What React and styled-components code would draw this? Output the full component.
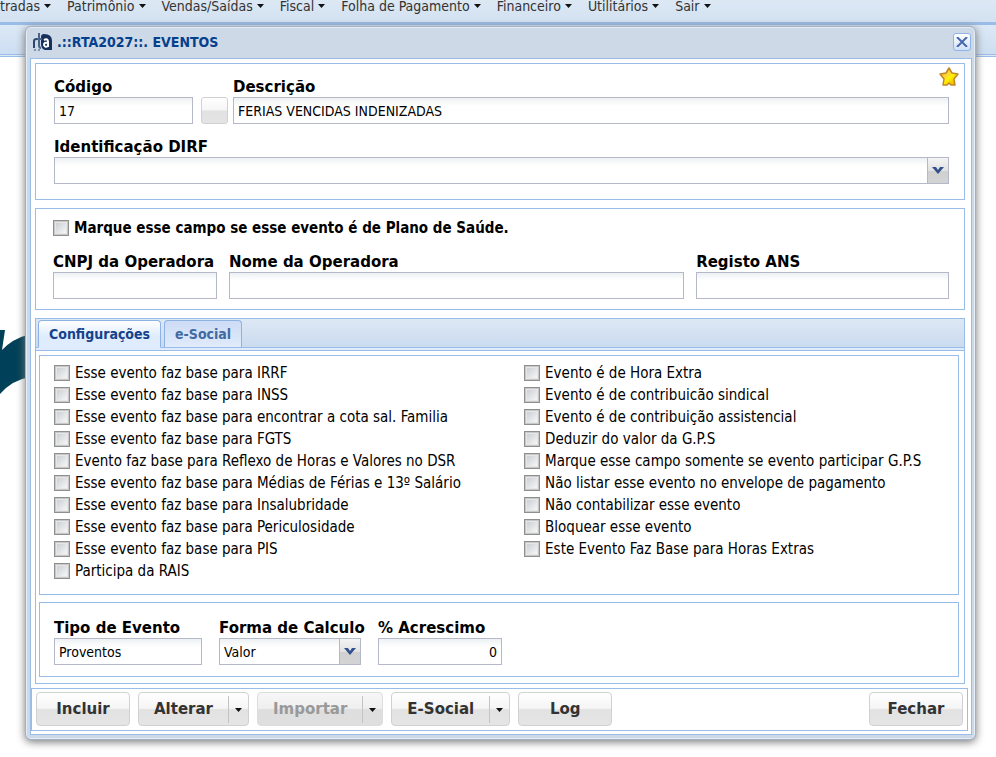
import { useState } from "react"
import styled, { createGlobalStyle } from "styled-components"

const menus = ["Entradas", "Patrimônio", "Vendas/Saídas", "Fiscal", "Folha de Pagamento", "Financeiro", "Utilitários", "Sair"];

const flags = [
    "Esse evento faz base para IRRF",
    "Esse evento faz base para INSS",
    "Esse evento faz base para encontrar a cota sal. Familia",
    "Esse evento faz base para FGTS",
    "Evento faz base para Reflexo de Horas e Valores no DSR",
    "Esse evento faz base para Médias de Férias e 13º Salário",
    "Esse evento faz base para Insalubridade",
    "Esse evento faz base para Periculosidade",
    "Esse evento faz base para PIS",
    "Participa da RAIS",
    "Evento é de Hora Extra",
    "Evento é de contribuicão sindical",
    "Evento é de contribuição assistencial",
    "Deduzir do valor da G.P.S",
    "Marque esse campo somente se evento participar G.P.S",
    "Não listar esse evento no envelope de pagamento",
    "Não contabilizar esse evento",
    "Bloquear esse evento",
    "Este Evento Faz Base para Horas Extras",
];

const Arrow = () => (
    <svg width="7" height="4" viewBox="0 0 7 4" aria-hidden="true">
        <path d="M0 0H7L3.5 4Z" fill="currentColor" />
    </svg>
)

const Logo = () => (
    <svg width="21" height="20" viewBox="0 0 21 20" aria-hidden="true">
        <path d="M12 2Q20 2 20 9V18H13Q9 17 9 12V5Q9 2 12 2Z" fill="#17305c" />
        <path d="M2 16V9Q2 7 5 7" fill="none" stroke="#2c466f" strokeWidth="2" />
        <path d="M7 1V13Q7 16 9 16M5 7H10" fill="none" stroke="#4a6488" strokeWidth="2" />
        <path d="M12 8Q16 6 16 10V15M16 11Q12 10 12 13Q13 16 16 14" fill="none" stroke="#fff" strokeWidth="2" />
        <path d="M2 18H4M6 18H8" stroke="#7f93b0" strokeWidth="2" />
    </svg>
)

const Star = () => (
    <svg width="20" height="20" viewBox="0 0 20 20" aria-hidden="true">
        <defs>
            <linearGradient id="gold" x1="0" y1="0" x2="1" y2="1">
                <stop offset="0" stopColor="#f0a800" />
                <stop offset="0.4" stopColor="#ffd83a" />
                <stop offset="0.55" stopColor="#fff200" />
                <stop offset="1" stopColor="#e89a00" />
            </linearGradient>
        </defs>
        <path d="M10 1L13 6L19 7L15 12L16 18L12 18L10 16L8 18L4 18L5 12L1 7L7 6Z" fill="url(#gold)" stroke="#c0862a" strokeWidth="1.5" strokeLinejoin="round" />
    </svg>
)

const Field = ({ id, label, ...rest }) => (
    <StyledField>
        <label htmlFor={id}>{label}</label>
        <TextBox id={id} {...rest} />
    </StyledField>
)

const Combo = ({ id, label, value }) => (
    <StyledField>
        <label htmlFor={id}>{label}</label>
        <StyledCombo>
            <select id={id} defaultValue={value}>
                <option>{value}</option>
            </select>
            <span>
                <svg width="12" height="8" viewBox="0 0 12 8" aria-hidden="true">
                    <path d="M0 0H4L6 3L8 0H12L6 7Z" fill="#32518d" />
                </svg>
            </span>
        </StyledCombo>
    </StyledField>
)

const Split = ({ label, disabled }) => (
    <StyledSplit $off={disabled}>
        <button type="button" disabled={disabled}>{label}</button>
        <button type="button" disabled={disabled} className="more" aria-label={"Mais opções de " + label}><Arrow /></button>
    </StyledSplit>
)

const App = () => {
    const [tab, setTab] = useState("Configurações");
    return (
        <Desktop>
            <GlobalStyle />
            <MenuBar>
                {menus.map((m) => <button type="button" key={m}>{m}<Arrow /></button>)}
            </MenuBar>
            <ShortcutBar />
            <Brand width="30" height="80" viewBox="0 0 30 80" aria-hidden="true">
                <path d="M0 10H5L2 30Q12 19 30 14V57Q12 60 0 74Z" fill="#004058" />
            </Brand>
            <Window>
                <TitleBar>
                    <Logo />
                    <h1>.::RTA2027::. EVENTOS</h1>
                    <button type="button" aria-label="Fechar janela">
                        <svg width="12" height="10" viewBox="0 0 12 10" aria-hidden="true">
                            <path d="M1 0L11 10M11 0L1 10" stroke="#4767b0" strokeWidth="2" />
                        </svg>
                    </button>
                </TitleBar>
                <Body>
                    <Panel className="event">
                        <Favorite type="button" aria-label="Favorito"><Star /></Favorite>
                        <CodeRow>
                            <Field id="codigo" label="Código" defaultValue="17" />
                            <SearchButton type="button" aria-label="Pesquisar" />
                            <Field id="descricao" label="Descrição" defaultValue="FERIAS VENCIDAS INDENIZADAS" />
                        </CodeRow>
                        <Combo id="dirf" label="Identificação DIRF" value="" />
                    </Panel>
                    <Panel className="health">
                        <Check $bold><input type="checkbox" />Marque esse campo se esse evento é de Plano de Saúde.</Check>
                        <HealthRow>
                            <Field id="cnpj" label="CNPJ da Operadora" />
                            <Field id="nome" label="Nome da Operadora" />
                            <Field id="ans" label="Registo ANS" />
                        </HealthRow>
                    </Panel>
                    <TabPanel>
                        <TabStrip role="tablist">
                            {["Configurações", "e-Social"].map((t) => (
                                <Tab type="button" role="tab" key={t} $on={tab === t} aria-selected={tab === t} onClick={() => setTab(t)}>{t}</Tab>
                            ))}
                        </TabStrip>
                        <TabBody>
                            <Panel className="flags">
                                {flags.map((f) => <Check key={f}><input type="checkbox" />{f}</Check>)}
                            </Panel>
                            <Panel className="values">
                                <ValueRow>
                                    <Field id="tipo" label="Tipo de Evento" defaultValue="Proventos" />
                                    <Combo id="forma" label="Forma de Calculo" value="Valor" />
                                    <Field id="acrescimo" label="% Acrescimo" defaultValue="0" className="number" />
                                </ValueRow>
                            </Panel>
                        </TabBody>
                    </TabPanel>
                    <Toolbar>
                        <Button type="button">Incluir</Button>
                        <Split label="Alterar" />
                        <Split label="Importar" disabled />
                        <Split label="E-Social" />
                        <Button type="button">Log</Button>
                        <Button type="button" className="close">Fechar</Button>
                    </Toolbar>
                </Body>
            </Window>
        </Desktop>
    )
}

const tahoma = `"DejaVu Sans Condensed", "Noto Sans", sans-serif`;
const verdana = `"DejaVu Sans", sans-serif`;
const line = "#99bce8";

const GlobalStyle = createGlobalStyle`
	* {
		box-sizing: border-box;
	}
	body {
		margin: 0;
		background-color: #fff;
		font-family: ${tahoma};
	}
	button,
	input,
	select {
		font-family: inherit;
		margin: 0;
	}
`;
const Desktop = styled.div`
	position: relative;
	min-height: 100vh;
	overflow: hidden;
`;
const MenuBar = styled.nav`
	display: flex;
	align-items: flex-start;
	gap: 16px;
	height: 25px;
	margin-left: -16px;
	background: linear-gradient(#dce8f4, #d3e1f1);
	border-bottom: 3px solid ${line};
	button {
		display: flex;
		align-items: center;
		gap: 4px;
		padding: 0;
		border: 0;
		background: none;
		font-size: 14px;
		line-height: 12px;
		color: #333;
		white-space: nowrap;
	}
	svg {
		color: #111;
	}
`;
const ShortcutBar = styled.div`
	height: 32px;
	background: linear-gradient(#dce8f5, #cddef2);
	border-bottom: 3px double ${line};
`;
const Brand = styled.svg`
	position: absolute;
	left: 0;
	top: 320px;
`;
const Window = styled.section`
	position: absolute;
	top: 26px;
	left: 25px;
	right: 20px;
	padding: 0 3px 4px 4px;
	background-color: #ced9e7;
	border: 1px solid #a2b1c5;
	border-radius: 6px;
	box-shadow: inset 0 0 0 1px #e4ecf6, 0 2px 8px #777;
`;
const TitleBar = styled.header`
	display: flex;
	align-items: center;
	gap: 4px;
	height: 31px;
	padding: 0 1px 1px 2px;
	h1 {
		flex: 1;
		margin: 0;
		font-size: 14px;
		line-height: 20px;
		color: #04408c;
	}
	button {
		display: grid;
		place-items: center;
		width: 18px;
		height: 18px;
		padding: 0;
		border: 1px solid #8fb3e6;
		border-radius: 3px;
		background: linear-gradient(#fff, #cfe0f8);
	}
`;
const Body = styled.div`
	display: flex;
	flex-direction: column;
	padding: 4px 3px 3px 0;
	background-color: #fff;
	border: 1px solid ${line};
`;
const Panel = styled.div`
	border: 1px solid ${line};
	background-color: #fff;
	&.event {
		position: relative;
		display: grid;
		gap: 13px;
		margin: 0 3px 8px 4px;
		padding: 13px 15px 15px 18px;
	}
	&.health {
		display: grid;
		gap: 14px;
		margin: 0 3px 8px 4px;
		padding: 9px 15px 10px 17px;
	}
	&.flags {
		display: grid;
		grid-template-columns: 52fr 48fr;
		grid-template-rows: repeat(10, 22px);
		grid-auto-flow: column;
		padding: 6px 0 12px 14px;
	}
	&.values {
		padding: 15px 14px 11px;
	}
`;
const Favorite = styled.button`
	position: absolute;
	top: 3px;
	right: 5px;
	display: flex;
	padding: 0;
	border: 0;
	background: none;
`;
const StyledField = styled.div`
	display: flex;
	flex-direction: column;
	min-width: 0;
	label {
		font-family: ${verdana};
		font-size: 15px;
		font-weight: bold;
		line-height: 20px;
		white-space: nowrap;
		color: #000;
	}
`;
const TextBox = styled.input`
	width: 100%;
	height: 27px;
	padding: 0 4px;
	border: 1px solid #b5b8c8;
	border-radius: 0;
	background: linear-gradient(#edf1f3, #fff 8px);
	font-size: 14px;
	color: #000;
	&.number {
		text-align: right;
	}
`;
const StyledCombo = styled.div`
	display: grid;
	select,
	span {
		grid-area: 1 / 1;
	}
	select {
		appearance: none;
		width: 100%;
		height: 27px;
		padding: 0 24px 0 4px;
		border: 1px solid #b5b8c8;
		border-radius: 0;
		background: linear-gradient(#edf1f3, #fff 8px);
		font-size: 14px;
		color: #000;
	}
	span {
		justify-self: end;
		display: grid;
		place-items: center;
		width: 22px;
		height: 27px;
		border: 1px solid #b5b8c8;
		background: linear-gradient(#f4f4f4, #e2e2e2 50%, #d0d0d0 52%, #d4d4d4);
		pointer-events: none;
	}
`;
const CodeRow = styled.div`
	display: grid;
	grid-template-columns: 139px auto 1fr;
	align-items: end;
`;
const SearchButton = styled.button`
	width: 27px;
	height: 27px;
	margin: 0 5px 0 8px;
	padding: 0;
	border: 1px solid #d1d1d1;
	border-radius: 3px;
	background: linear-gradient(#fff, #f6f6f6 48%, #e2e2e2 52%, #e4e4e4);
`;
const HealthRow = styled.div`
	display: grid;
	grid-template-columns: 164px 9fr 5fr;
	gap: 12px;
`;
const Check = styled.label`
	display: flex;
	align-items: center;
	gap: 5px;
	font-size: 15px;
	font-weight: ${(p) => (p.$bold ? "bold" : "normal")};
	line-height: 20px;
	white-space: nowrap;
	color: #000;
	input {
		appearance: none;
		width: 16px;
		height: 16px;
		padding: 2px;
		border: 1px solid #8e8f8f;
		background: linear-gradient(135deg, #cbcfd5, #f6f6f6) content-box, #e6e6e6;
		box-shadow: inset 0 0 0 1px #c8c8c8;
	}
	input:checked {
		background: linear-gradient(135deg, #4b6a92, #6f8fb8) content-box, #f4f4f4;
	}
`;
const TabPanel = styled.div`
	margin: 0 3px 4px 4px;
	border: 1px solid ${line};
`;
const TabStrip = styled.div`
	display: flex;
	gap: 3px;
	height: 32px;
	padding: 1px 2px 0;
	background:
		linear-gradient(${line}, ${line}) 0 28px / 100% 1px no-repeat,
		linear-gradient(#dde8f5, #cbdbef) 0 0 / 100% 28px no-repeat,
		#deecfd;
	border-bottom: 1px solid ${line};
`;
const Tab = styled.button`
	height: 28px;
	padding: 0 10px;
	border: 1px solid #8db2e3;
	border-bottom-color: ${(p) => (p.$on ? "#deecfd" : "#99bce8")};
	border-radius: 4px 4px 0 0;
	background: ${(p) => (p.$on ? "linear-gradient(#fff, #deecfd 60%)" : "linear-gradient(#cddcf5, #e0ebfb)")};
	font-size: 14px;
	font-weight: bold;
	color: ${(p) => (p.$on ? "#15428b" : "#416aa3")};
`;
const TabBody = styled.div`
	display: grid;
	gap: 7px;
	padding: 4px 5px 6px 3px;
`;
const ValueRow = styled.div`
	display: grid;
	grid-template-columns: 148px 142px 124px;
	gap: 17px;
`;
const Toolbar = styled.div`
	display: flex;
	gap: 8px;
	padding: 3px 4px 4px;
	border: 1px solid ${line};
	.close {
		margin-left: auto;
	}
`;
const Button = styled.button`
	min-width: 94px;
	height: 34px;
	padding: 0 17px;
	border: 1px solid #d1d1d1;
	border-radius: 4px;
	background: linear-gradient(#fff, #f5f5f5 48%, #e2e2e2 52%, #e5e5e5);
	font-family: ${verdana};
	font-size: 15px;
	font-weight: bold;
	color: #333;
`;
const StyledSplit = styled.div`
	display: flex;
	height: 34px;
	border: 1px solid ${(p) => (p.$off ? "#ddd" : "#d1d1d1")};
	border-radius: 4px;
	background: ${(p) => (p.$off
		? "linear-gradient(#f7f7f7, #efefef 48%, #dedede 52%, #dfdfdf)"
		: "linear-gradient(#fff, #f5f5f5 48%, #e2e2e2 52%, #e5e5e5)")};
	button {
		padding: 0 15px;
		border: 0;
		background: none;
		font-family: ${verdana};
		font-size: 15px;
		font-weight: bold;
		color: ${(p) => (p.$off ? "#999" : "#333")};
	}
	.more {
		display: grid;
		place-items: center;
		width: 20px;
		margin: 3px 0 2px;
		padding: 0;
		border-left: 1px solid #c4c4c4;
		color: #111;
	}
`;
export default App;
